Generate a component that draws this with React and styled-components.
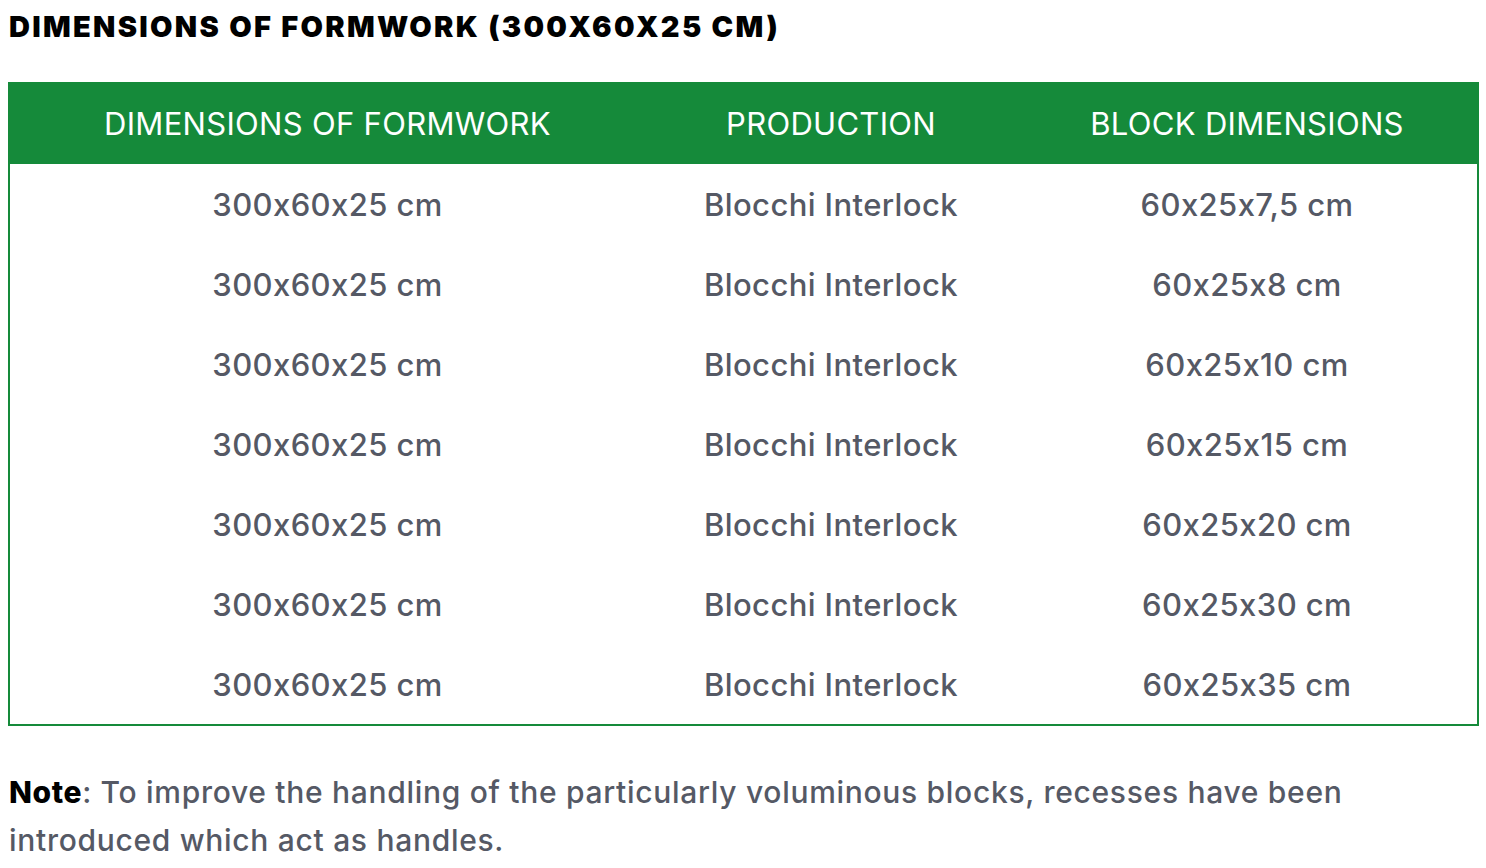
import React from 'react'
import styled, { createGlobalStyle } from 'styled-components'

const GlobalStyle = createGlobalStyle`
  body {
    margin: 0;
    background: #ffffff;
    font-family: Inter, "Noto Sans", sans-serif;
    font-feature-settings: "calt" 0;
  }
`

const rows = ['60x25x7,5 cm', '60x25x8 cm', '60x25x10 cm', '60x25x15 cm', '60x25x20 cm', '60x25x30 cm', '60x25x35 cm']

function App() {
  return (
    <Page>
      <GlobalStyle />
      <Title>DIMENSIONS OF FORMWORK (300X60X25 CM)</Title>
      <Table>
        <HeadRow>
          <HeadCell>DIMENSIONS OF FORMWORK</HeadCell>
          <HeadCell>PRODUCTION</HeadCell>
          <HeadCell>BLOCK DIMENSIONS</HeadCell>
        </HeadRow>
        {rows.map(block => (
          <Row key={block}>
            <Cell>300x60x25 cm</Cell>
            <Cell>Blocchi Interlock</Cell>
            <Cell>{block}</Cell>
          </Row>
        ))}
      </Table>
      <Note>
        <strong>Note</strong>: To improve the handling of the particularly voluminous blocks, recesses have been introduced which act as handles.
      </Note>
    </Page>
  )
}

export default App

const Page = styled.div`
  padding: 8px 8px 0 8px;
  width: 1471px;
`
const Title = styled.h2`
  margin: 0 0 0 1px;
  height: 74px;
  font-family: Inter, sans-serif;
  font-weight: 900;
  font-size: 29px;
  line-height: 38px;
  color: #000;
  letter-spacing: 2.3px;
`
const Table = styled.div`
  border: 2px solid #158a3a;
  border-top: none;
`
const HeadRow = styled.div`
  display: grid;
  grid-template-columns: 635px 372px auto;
  height: 82px;
  align-items: center;
  background: #158a3a;
  margin: 0 -2px;
  padding: 0 2px;
`
const HeadCell = styled.div`
  text-align: center;
  color: #fff;
  font-size: 31px;
  font-weight: 400;
  letter-spacing: 0.3px;
`
const Row = styled.div`
  display: grid;
  grid-template-columns: 635px 372px auto;
  height: 80px;
  align-items: center;
`
const Cell = styled.div`
  text-align: center;
  color: #555965;
  font-size: 31px;
  font-weight: 500;
  letter-spacing: 0.4px;
`
const Note = styled.p`
  margin: 42px 0 0 1px;
  font-size: 30px;
  font-weight: 500;
  line-height: 48px;
  letter-spacing: 0.7px;
  color: #555965;
  width: 1400px;
  strong {
    color: #000;
    font-weight: 800;
    letter-spacing: 0.6px;
  }
`
